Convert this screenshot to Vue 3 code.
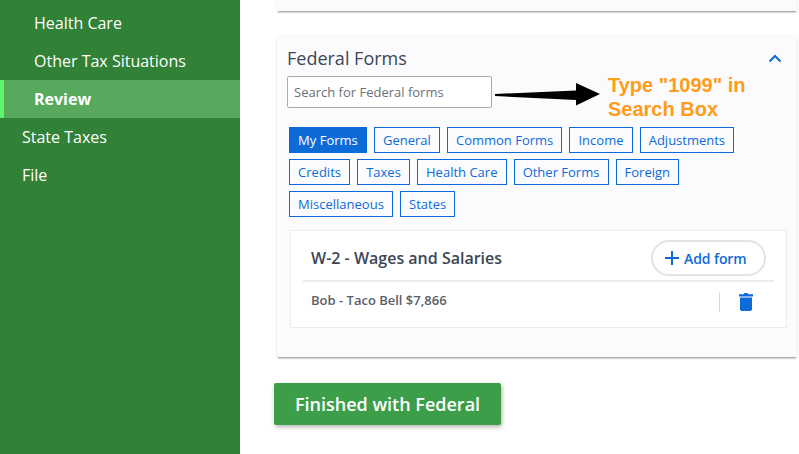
<template>
  <div class="page">
    <aside class="sidebar">
      <a v-for="item in navItems" :key="item.label" class="nav-item" :class="{ sub: item.sub, active: item.active }">
        {{ item.label }}
      </a>
    </aside>

    <main class="main">
      <div class="card top-card"></div>

      <section class="card forms-card">
        <div class="card-head">
          <h2>Federal Forms</h2>
          <svg class="chevron" width="14" height="9" viewBox="0 0 14 9">
            <path d="M1.500 7.500 7 2l5.500 5.500" fill="none" stroke="#0d6bd8" stroke-width="2" />
          </svg>
        </div>

        <input class="search" type="text" placeholder="Search for Federal forms" />

        <div class="tags">
          <button v-for="tag in tags" :key="tag" class="tag" :class="{ selected: tag === 'My Forms' }">{{ tag }}</button>
        </div>

        <div class="form-box">
          <div class="form-head">
            <h3>W-2 - Wages and Salaries</h3>
            <button class="add-btn">
              <svg width="14" height="14" viewBox="0 0 14 14">
                <path d="M7 0v14M0 7h14" stroke="#0d6bd8" stroke-width="2" />
              </svg>
              Add form
            </button>
          </div>
          <div class="form-row">
            <span>Bob - Taco Bell $7,866</span>
            <div class="row-action">
              <svg width="14" height="18" viewBox="0 0 14 18">
                <path d="M4.500 1.200 5.500 0h3l1 1.200H14V3.400H0V1.200z" fill="#0d6bd8" />
                <path d="M1 4.500h12v12L11.800 18H2.200L1 16.500z" fill="#0d6bd8" />
              </svg>
            </div>
          </div>
        </div>

        <div class="note">
          <svg class="note-arrow" width="105" height="24" viewBox="0 0 105 24">
            <path d="M0 12 81 8.500V1l24 11-24 11.500V18L0 14z" fill="#000" />
          </svg>
          <p>Type "1099" in<br />Search Box</p>
        </div>
      </section>

      <button class="finish">Finished with Federal</button>
    </main>
  </div>
</template>

<script setup>
const navItems = [
  { label: 'Health Care', sub: true },
  { label: 'Other Tax Situations', sub: true },
  { label: 'Review', sub: true, active: true },
  { label: 'State Taxes' },
  { label: 'File' }
]

const tags = [
  'My Forms',
  'General',
  'Common Forms',
  'Income',
  'Adjustments',
  'Credits',
  'Taxes',
  'Health Care',
  'Other Forms',
  'Foreign',
  'Miscellaneous',
  'States'
]
</script>

<style scoped>
.page {
  display: flex;
  width: 799px;
  height: 454px;
  overflow: hidden;
  background: #fff;
  font-family: 'Open Sans', sans-serif;
}

.sidebar {
  flex: none;
  width: 240px;
  padding-top: 4px;
  box-sizing: border-box;
  background: #318136;
}

.nav-item {
  display: block;
  height: 38px;
  padding-left: 22px;
  box-sizing: border-box;
  font-size: 16px;
  line-height: 38px;
  color: #fff;
}

.nav-item.sub {
  padding-left: 34px;
}

.nav-item.active {
  padding-left: 30px;
  border-left: 4px solid #5ff56c;
  background: #57a95e;
  font-weight: 700;
}

.main {
  flex: 1;
  padding-left: 37px;
  padding-right: 2px;
}

.card {
  background: #fbfbfe;
  box-shadow: 0 2px 2px -1px rgba(0, 0, 0, 0.45), 0 0 3px rgba(0, 0, 0, 0.08);
}

.top-card {
  height: 11px;
  margin-bottom: 25px;
}

.forms-card {
  position: relative;
  height: 321px;
  padding: 10px;
  box-sizing: border-box;
}

.card-head {
  display: flex;
  align-items: center;
  justify-content: space-between;
  height: 24px;
  padding-right: 5px;
}

.card-head h2 {
  margin: 0;
  font-size: 18px;
  font-weight: 400;
  color: #3c4654;
}

.search {
  display: block;
  width: 205px;
  height: 32px;
  margin-top: 6px;
  padding: 0 6px;
  box-sizing: border-box;
  border: 1px solid #a9abb1;
  border-radius: 2px;
  background: #fff;
  font-family: inherit;
  font-size: 13px;
}

.search::placeholder {
  color: #6c7079;
  opacity: 1;
}

.tags {
  display: flex;
  flex-wrap: wrap;
  gap: 6px 7px;
  margin: 19px 0 0 2px;
}

.tag {
  height: 26px;
  padding: 0 8.1px;
  border: 1px solid #0d6bd8;
  background: transparent;
  font-family: inherit;
  font-size: 13px;
  color: #0d6bd8;
}

.tag.selected {
  background: #0d6bd8;
  color: #fff;
  font-weight: 500;
}

.form-box {
  width: 497px;
  height: 98px;
  margin: 13px 0 0 3px;
  padding: 0 12px;
  box-sizing: border-box;
  border: 1px solid #ebecf0;
  background: #fff;
}

.form-head {
  display: flex;
  align-items: center;
  justify-content: space-between;
  height: 51px;
  padding: 5px 8px 0 8px;
  box-sizing: border-box;
  border-bottom: 2px solid #ebecf0;
}

.form-head h3 {
  margin: 0;
  font-size: 16px;
  font-weight: 600;
  color: #3c4654;
}

.add-btn {
  display: flex;
  align-items: center;
  gap: 5px;
  width: 115px;
  height: 36px;
  padding: 0 0 0 12px;
  box-sizing: border-box;
  border: 2px solid #e3e4ea;
  border-radius: 18px;
  background: #fff;
  font-family: inherit;
  font-size: 14px;
  font-weight: 600;
  letter-spacing: -0.1px;
  color: #0d6bd8;
}

.form-row {
  display: flex;
  align-items: center;
  justify-content: space-between;
  height: 36px;
  padding-left: 8px;
  font-size: 13px;
  font-weight: 600;
  color: #5c6068;
}

.row-action {
  display: flex;
  align-items: center;
  height: 20px;
  margin-top: 4px;
  padding: 0 21px 0 19px;
  border-left: 1px solid #d9dade;
}

.note {
  position: absolute;
  left: 218px;
  top: 37px;
  display: flex;
  align-items: flex-start;
  gap: 8px;
}

.note-arrow {
  margin-top: 9px;
}

.note p {
  margin: 0;
  font-family: 'Liberation Sans', Arial, sans-serif;
  font-size: 20px;
  font-weight: 700;
  line-height: 24px;
  color: #ff9c1a;
}

.finish {
  display: block;
  width: 227px;
  height: 42px;
  margin: 26px 0 0 -3px;
  border: 0;
  border-radius: 2px;
  background: #3d9e4a;
  box-shadow: 1px 2px 4px rgba(0, 0, 0, 0.3);
  font-family: inherit;
  font-size: 18px;
  font-weight: 600;
  color: #fff;
}
</style>
